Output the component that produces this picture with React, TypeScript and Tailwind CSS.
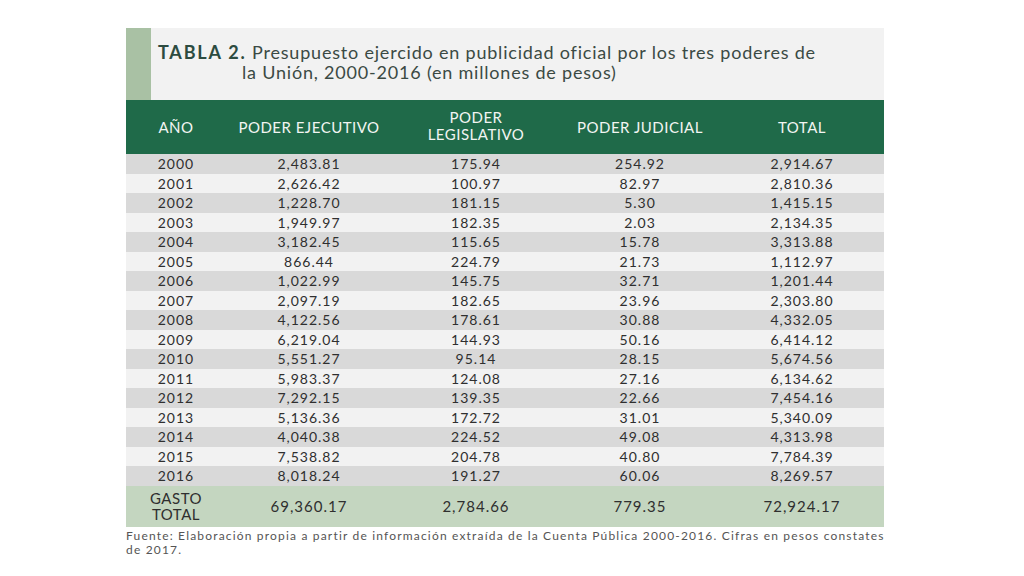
const ROWS: [string, string, string, string, string][] = [
  ["2000", "2,483.81", "175.94", "254.92", "2,914.67"],
  ["2001", "2,626.42", "100.97", "82.97", "2,810.36"],
  ["2002", "1,228.70", "181.15", "5.30", "1,415.15"],
  ["2003", "1,949.97", "182.35", "2.03", "2,134.35"],
  ["2004", "3,182.45", "115.65", "15.78", "3,313.88"],
  ["2005", "866.44", "224.79", "21.73", "1,112.97"],
  ["2006", "1,022.99", "145.75", "32.71", "1,201.44"],
  ["2007", "2,097.19", "182.65", "23.96", "2,303.80"],
  ["2008", "4,122.56", "178.61", "30.88", "4,332.05"],
  ["2009", "6,219.04", "144.93", "50.16", "6,414.12"],
  ["2010", "5,551.27", "95.14", "28.15", "5,674.56"],
  ["2011", "5,983.37", "124.08", "27.16", "6,134.62"],
  ["2012", "7,292.15", "139.35", "22.66", "7,454.16"],
  ["2013", "5,136.36", "172.72", "31.01", "5,340.09"],
  ["2014", "4,040.38", "224.52", "49.08", "4,313.98"],
  ["2015", "7,538.82", "204.78", "40.80", "7,784.39"],
  ["2016", "8,018.24", "191.27", "60.06", "8,269.57"],
];

const COLS = "grid grid-cols-[100px_166px_168px_160px_164px]";

export default function App() {
  return (
    <div className="w-[1024px] h-[576px] bg-white pt-[28px] pl-[126px] font-['Lato',sans-serif]">
      <div className="w-[758px]">
        {/* title */}
        <div className="flex h-[72px] bg-[#f2f2f2]">
          <div className="w-[25px] bg-[#a9c1a4]" />
          <div className="pl-[7px] pt-[14px] text-[18px] leading-[20px] text-[#3b4a44] tracking-[0.8px]">
            <div>
              <span className="font-bold text-[#2c4b40] tracking-[1.8px]">TABLA 2.</span> Presupuesto ejercido en publicidad oficial por los tres poderes de
            </div>
            <div className="pl-[84px]">la Unión, 2000-2016 (en millones de pesos)</div>
          </div>
        </div>

        {/* header */}
        <div className={`${COLS} h-[54px] bg-[#1f6a49] text-[#f2f5f2] text-[15px] leading-[17px] tracking-[0.5px] items-center text-center`}>
          <div>AÑO</div>
          <div>PODER EJECUTIVO</div>
          <div className="-mt-[2px]">PODER<br />LEGISLATIVO</div>
          <div>PODER JUDICIAL</div>
          <div>TOTAL</div>
        </div>

        {/* rows */}
        {ROWS.map((r, i) => (
          <div key={r[0]}
            className={`${COLS} h-[19.5px] items-center text-center text-[14px] leading-[19px] tracking-[1px] text-[#2f2f2f] ${i % 2 === 0 ? "bg-[#d9d9d9]" : "bg-[#f2f2f2]"}`}>
            {r.map((c, j) => <div key={j}>{c}</div>)}
          </div>
        ))}

        {/* total */}
        <div className={`${COLS} h-[41px] items-center text-center text-[15px] tracking-[1px] text-[#2f2f2f] bg-[#c4d6c0]`}>
          <div className="text-[15px] leading-[16px] tracking-[0.5px]">GASTO<br />TOTAL</div>
          <div>69,360.17</div>
          <div>2,784.66</div>
          <div>779.35</div>
          <div>72,924.17</div>
        </div>

        {/* source */}
        <div className="pt-[2px] text-[12px] leading-[14px] tracking-[1.18px] text-[#555] whitespace-nowrap">
          <div>Fuente: Elaboración propia a partir de información extraída de la Cuenta Pública 2000-2016. Cifras en pesos constates</div>
          <div>de 2017.</div>
        </div>
      </div>
    </div>
  );
}
